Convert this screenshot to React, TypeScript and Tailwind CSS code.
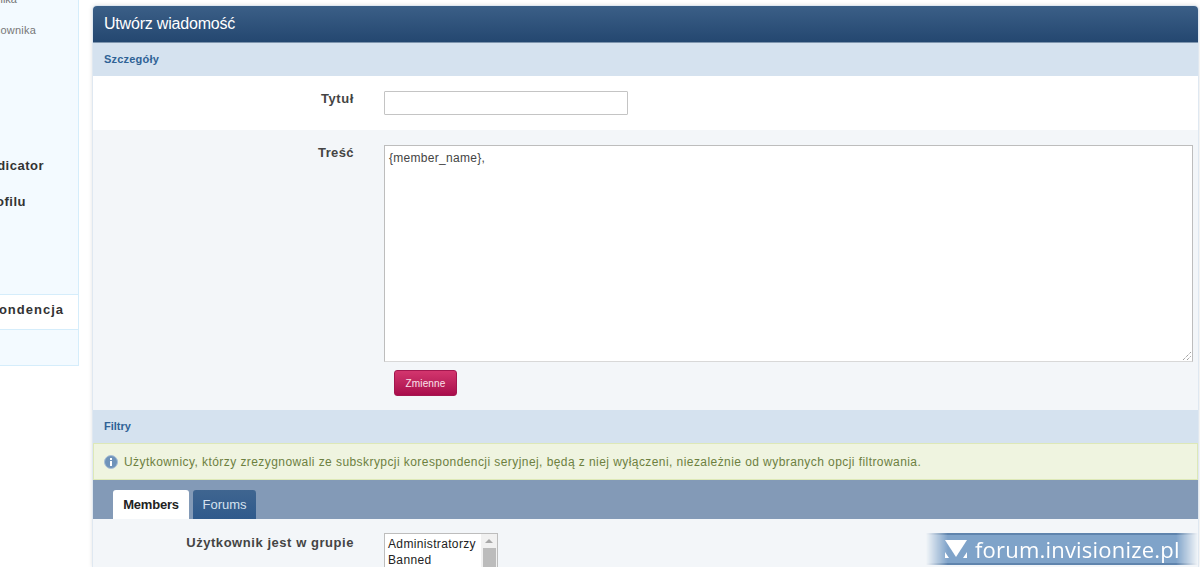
import React from 'react';

const Sidebar: React.FC = () => (
  <div className="w-[79px] h-[366px] shrink-0 overflow-hidden bg-[#f3faff] border-r border-b border-[#d5edfb] font-['Liberation_Sans',sans-serif] flex flex-col">
    <div className="h-[60px] shrink-0 text-[11px] leading-[14px] text-[#777]">
      <div className="flex justify-end whitespace-nowrap pr-[61px] -mt-[8px]">Menedżer pracownika</div>
      <div className="flex justify-end whitespace-nowrap pr-[42px] mt-[17px] tracking-[0.2px]">Profil pracownika</div>
    </div>
    <div className="h-[115px] shrink-0 flex items-end justify-end whitespace-nowrap pr-[34px] text-[13px] font-bold tracking-[0.5px] leading-[18px] text-[#333]">Indicator</div>
    <div className="h-[36px] shrink-0 flex items-end justify-end whitespace-nowrap pr-[52px] text-[13px] font-bold tracking-[0.5px] leading-[18px] text-[#333]">Profilu</div>
    <div className="flex-1" />
    <div className="h-[36px] shrink-0 bg-white border-y border-[#d5edfb] flex items-center justify-end whitespace-nowrap pr-[14px] pb-[4px] text-[13px] font-bold tracking-[1px] text-[#333] mb-[35px]">Korespondencja</div>
  </div>
);

const App: React.FC = () => {
  return (
    <div className="relative w-[1200px] h-[567px] overflow-hidden bg-white flex font-['Liberation_Sans',sans-serif]">
      <Sidebar />

      <div className="ml-[14px] mt-[6px] w-[1105px] h-[561px] shrink-0 rounded-t-[4px] bg-[#f3f6f9] shadow-[0_0_0_1px_#dfe8f1,0_0_5px_rgba(0,0,0,0.18)] flex flex-col">
        <div className="h-[37px] shrink-0 rounded-t-[4px] bg-gradient-to-b from-[#3b5f87] to-[#244770] border-b border-[#7e95ae] flex items-center px-[11px] text-[16px] tracking-[-0.2px] text-white">
          Utwórz wiadomość
        </div>

        <div className="h-[33px] shrink-0 bg-[#d5e2ef] flex items-center px-[11px] text-[11px] font-bold tracking-[0.2px] text-[#2f6296]">
          Szczegóły
        </div>

        <div className="h-[54px] shrink-0 bg-white flex">
          <div className="w-[261px] pt-[15px] text-right text-[13px] leading-[16px] font-bold tracking-[0.6px] text-[#444]">Tytuł</div>
          <div className="ml-[30px] pt-[15px]">
            <div className="w-[244px] h-[24px] bg-white border border-[#c4c4c4] rounded-[1px]" />
          </div>
        </div>

        <div className="h-[280px] shrink-0 flex">
          <div className="w-[261px] pt-[15px] text-right text-[13px] leading-[16px] font-bold tracking-[0.4px] text-[#444]">Treść</div>
          <div className="ml-[30px] pt-[15px]">
            <div className="relative w-[809px] h-[217px] bg-white border border-[#bdbdbd] border-b-[#d8d8d8] px-[4px] py-[5px] text-[12px] leading-[14px] tracking-[0.3px] text-[#444]">
              {'{member_name},'}
              <svg className="absolute right-0 bottom-0" width="11" height="11" viewBox="0 0 11 11">
                <path d="M2 10 L10 2 M6 10 L10 6" stroke="#777" strokeWidth="1" strokeDasharray="1 1" fill="none" />
              </svg>
            </div>
            <button className="ml-[10px] mt-[8px] w-[63px] h-[26px] rounded-[3px] bg-gradient-to-b from-[#d3356e] to-[#a90b4c] border border-[#a3174f] text-[10px] tracking-[0.15px] text-[#fbe3ec] flex items-center justify-center">
              Zmienne
            </button>
          </div>
        </div>

        <div className="h-[33px] shrink-0 bg-[#d5e2ef] flex items-center px-[11px] text-[11px] font-bold text-[#2f6296]">
          Filtry
        </div>

        <div className="h-[37px] shrink-0 bg-[#eff4e0] border border-[#dde8b8] flex items-center pl-[10px] text-[12px] tracking-[0.43px] text-[#6d803f] whitespace-nowrap">
          <svg className="mr-[6px] shrink-0" width="14" height="14" viewBox="0 0 14 14">
            <circle cx="7" cy="7" r="6.5" fill="#6f93ba" stroke="#a9bfd6" />
            <rect x="6" y="6" width="2" height="5" fill="#fff" />
            <rect x="6" y="3" width="2" height="2" fill="#fff" />
          </svg>
          Użytkownicy, którzy zrezygnowali ze subskrypcji korespondencji seryjnej, będą z niej wyłączeni, niezależnie od wybranych opcji filtrowania.
        </div>

        <div className="h-[39px] shrink-0 bg-[#839ab7] flex items-end gap-[4px] pl-[20px] text-[13px]">
          <div className="w-[76px] h-[29px] bg-white rounded-t-[3px] flex items-center justify-center font-bold tracking-[-0.2px] text-[#222]">Members</div>
          <div className="w-[63px] h-[29px] bg-gradient-to-b from-[#3f6590] to-[#2f5a8c] rounded-t-[3px] flex items-center justify-center text-[#d5e2ef]">Forums</div>
        </div>

        <div className="flex-1 flex">
          <div className="w-[261px] pt-[16px] text-right text-[13px] leading-[16px] font-bold tracking-[0.55px] text-[#444]">Użytkownik jest w grupie</div>
          <div className="ml-[30px] pt-[14px]">
            <div className="w-[114px] h-[60px] bg-white border border-[#bdbdbd] flex overflow-hidden text-[12px] leading-[16px] tracking-[0.35px] text-[#222]">
              <div className="flex-1 pl-[3px] pt-[2px]">
                <div>Administratorzy</div>
                <div>Banned</div>
              </div>
              <div className="w-[16px] shrink-0 bg-[#f1f1f1] flex flex-col items-center pt-[5px]">
                <div className="w-0 h-0 border-x-[4px] border-x-transparent border-b-[4px] border-b-[#a8a8a8]" />
                <div className="mt-[5px] w-[13px] flex-1 bg-[#bcbcbc]" />
              </div>
            </div>
          </div>
        </div>
      </div>

      {/* watermark over the page */}
      <div className="absolute left-[926px] top-[533px] w-[272px] h-[32px] bg-[#7fa3c9] border-y-2 border-[#5f84ad] [mask-image:linear-gradient(to_right,transparent,black_8%,black_92%,transparent)] flex items-center pl-[18px] text-[22px] tracking-[0.2px] text-white font-['Open_Sans',sans-serif]">
        <svg className="mr-[7px] shrink-0" width="24" height="22" viewBox="0 0 24 22">
          <path d="M1 2 H23 L12 19 Z" fill="#fff" />
          <path d="M1 14 L5 20 H1 Z M23 14 V20 H19 Z" fill="#fff" />
        </svg>
        forum.invisionize.pl
      </div>
    </div>
  );
};

export default App;
